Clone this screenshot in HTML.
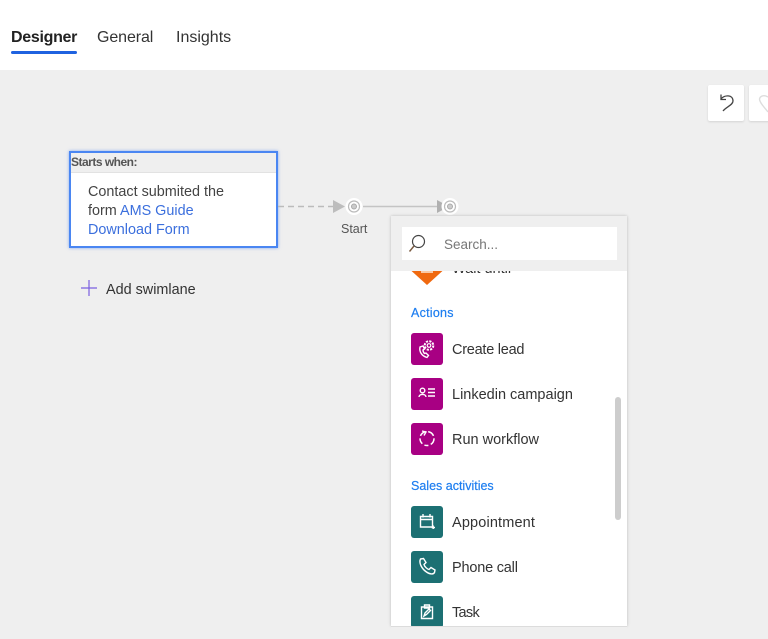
<!DOCTYPE html>
<html><head><meta charset="utf-8">
<style>
html,body{margin:0;padding:0}
body{width:768px;height:639px;overflow:hidden;position:relative;background:#efefef;font-family:"Liberation Sans",sans-serif;color:#333}
.t{position:absolute;white-space:nowrap;line-height:20px}
.ic{position:absolute;left:411px;width:32px;height:32px;border-radius:3px}
.m{background:#a80083}.g{background:#1c7073}
.ic svg{position:absolute;left:0;top:0;width:32px;height:32px;fill:none;stroke:#fff;stroke-width:1.4}
.it{left:452px;font-size:14.5px;color:#333}
.hd{left:411px;font-size:12.5px;color:#1e7ef0;-webkit-text-stroke:.2px #1e7ef0}
</style></head><body>
<div style="position:absolute;left:0;top:0;width:768px;height:70px;background:#fff"></div>
<div class="t" style="left:11px;top:28px;font-size:16px;font-weight:bold;color:#222;letter-spacing:-.3px">Designer</div>
<div style="position:absolute;left:11px;top:51px;width:66px;height:3px;border-radius:2px;background:#1f62e0"></div>
<div class="t" style="left:97px;top:28px;font-size:16px;color:#333;letter-spacing:-.1px">General</div>
<div class="t" style="left:176px;top:28px;font-size:16px;color:#333">Insights</div>

<div style="position:absolute;left:708px;top:85px;width:36px;height:36px;background:#fff;border-radius:2px;box-shadow:0 1px 2px rgba(0,0,0,.12)"></div>
<div style="position:absolute;left:749px;top:85px;width:30px;height:36px;background:#fff;border-radius:2px;box-shadow:0 1px 2px rgba(0,0,0,.12)"></div>
<svg style="position:absolute;left:708px;top:85px" width="60" height="36" fill="none"><path d="M13 9.500V14.500H18M13 14C16 10 25 9 25 16C25 20 18 22 15 26" stroke="#444" stroke-width="1.300"/><path d="M60 12C55 9 50 12 52 16C53 19 56 22 60 27" stroke="#ddd" stroke-width="1.400"/></svg>

<div style="position:absolute;left:69px;top:151px;width:205px;height:93px;border:2px solid #4a86f2;background:#fff;box-shadow:0 0 3px rgba(60,120,240,.6)"></div>
<div style="position:absolute;left:71px;top:153px;width:205px;height:19px;background:#efefef;border-bottom:1px solid #e2e2e2"></div>
<div class="t" style="left:71px;top:152px;font-size:12px;font-weight:bold;color:#555;letter-spacing:-.5px">Starts when:</div>
<div class="t" style="left:88px;top:183px;font-size:14.4px;line-height:19px;color:#444;white-space:normal;width:170px">Contact submited the<br>form <span style="color:#3b6fdd">AMS Guide</span><br><span style="color:#3b6fdd">Download Form</span></div>

<svg style="position:absolute;left:80px;top:279px" width="18" height="18"><path d="M9 1V17M1 9H17" stroke="#7b5fe0" stroke-width="1.200"/></svg>
<div class="t" style="left:106px;top:280px;font-size:14.4px;color:#333">Add swimlane</div>

<svg style="position:absolute;left:270px;top:190px" width="200" height="34" fill="none">
<path d="M8 16.500H64" stroke="#bbb" stroke-width="1.400" stroke-dasharray="6 4"/>
<path d="M63 10L75 16.500L63 23Z" fill="#bdbdbd"/>
<circle cx="84" cy="16.500" r="8.500" fill="#fff"/><circle cx="84" cy="16.500" r="5.500" stroke="#bbb" stroke-width="1.200"/><circle cx="84" cy="16.500" r="2.500" fill="#ccc" stroke="#aaa"/>
<path d="M93 16.500H170" stroke="#c4c4c4" stroke-width="1.600"/>
<path d="M167 10L179 16.500L167 23Z" fill="#b0b0b0"/>
<circle cx="180" cy="16.500" r="8.500" fill="#fff"/><circle cx="180" cy="16.500" r="5.500" stroke="#bbb" stroke-width="1.200"/><circle cx="180" cy="16.500" r="2.500" fill="#ccc" stroke="#aaa"/>
</svg>
<div class="t" style="left:341px;top:219px;font-size:12.500px;color:#555">Start</div>

<div style="position:absolute;left:391px;top:216px;width:236px;height:410px;background:#fff;box-shadow:0 0 3px rgba(0,0,0,.22);overflow:hidden">
<div style="position:absolute;left:0;top:0;width:236px;height:55px;background:#efefef;z-index:2"></div>
<div style="position:absolute;left:11px;top:11px;width:215px;height:33px;background:#fff;z-index:3"></div>
<svg style="position:absolute;left:17px;top:17px;z-index:4" width="20" height="20" fill="none"><circle cx="10.500" cy="8.500" r="6" stroke="#444" stroke-width="1.200"/><path d="M6 13L1.500 18.500" stroke="#7a5a40" stroke-width="1.400"/></svg>
<div class="t" style="left:53px;top:19px;font-size:13.500px;color:#777;z-index:4">Search...</div>
<div style="position:absolute;left:20px;top:40px;width:32px;height:29px;background:#f0690f;clip-path:polygon(0 50%,100% 50%,50% 100%)"></div>
<div style="position:absolute;left:30px;top:55px;width:12px;height:2px;background:#f9c9a5"></div>
<div class="t" style="left:61px;top:43px;font-size:14.500px;color:#333">Wait until</div>
<div style="position:absolute;left:224px;top:181px;width:6px;height:123px;border-radius:3px;background:#cdcdcd"></div>
</div>

<div class="t hd" style="top:303px;letter-spacing:.25px">Actions</div>
<div class="ic m" style="top:333px"><svg viewBox="0 0 32 32"><path d="M9 14C8 19 11 23 16 24.500L17.500 22.500L15 20L13.500 20.500C12.500 19.500 12 18 12 17L13.500 16L12 13Z"/><circle cx="18" cy="12.500" r="1.800" stroke-width="1.200"/><circle cx="18" cy="12.500" r="4.300" stroke-width="2" stroke-dasharray="2.200 1.200"/></svg></div>
<div class="t it" style="top:340px;letter-spacing:-.25px">Create lead</div>
<div class="ic m" style="top:378px"><svg viewBox="0 0 32 32"><circle cx="11.500" cy="12.500" r="2.300"/><path d="M8 19C8 15.500 15 15.500 15 19M17 11H24M17 14.500H24M17 18H24"/></svg></div>
<div class="t it" style="top:385px">Linkedin campaign</div>
<div class="ic m" style="top:423px"><svg viewBox="0 0 32 32"><circle cx="16" cy="15.500" r="7" stroke-width="1.500" stroke-dasharray="7 2.500 4 2.500 6 2.500 7 2.500"/><path d="M11 8L15 9L13 12.500"/></svg></div>
<div class="t it" style="top:430px">Run workflow</div>

<div class="t hd" style="top:476px">Sales activities</div>
<div class="ic g" style="top:506px"><svg viewBox="0 0 32 32"><path d="M9.500 10.500H21.500V21H9.500ZM9.500 13.500H21.500M12 8V11.500M19 8V11.500M20.500 21.500H24M22.200 19.500V23"/></svg></div>
<div class="t it" style="top:513px;letter-spacing:.15px">Appointment</div>
<div class="ic g" style="top:551px"><svg viewBox="0 0 32 32"><path d="M9.500 8L12.500 7.500L15 11.500L13 13.500C13.500 15.500 16 18 18 18.500L20 16.500L24 19L23.500 21.500C22.500 23.500 19 23.500 15.500 21C11 18 7.500 12 9.500 8Z"/></svg></div>
<div class="t it" style="top:558px;letter-spacing:-.2px">Phone call</div>
<div class="ic g" style="top:596px"><svg viewBox="0 0 32 32"><path d="M10.500 11H21.500V22.500H10.500ZM13.500 9H18.500V12H13.500ZM13 20L14 17L18 13L19.500 14.500L15.500 18.500Z"/></svg></div>
<div class="t it" style="top:603px;letter-spacing:-.7px">Task</div>
<div style="position:absolute;left:391px;top:626px;width:236px;height:13px;background:#efefef"></div>
<div style="position:absolute;left:391px;top:626px;width:236px;height:1px;background:#dcdcdc"></div>
</body></html>
